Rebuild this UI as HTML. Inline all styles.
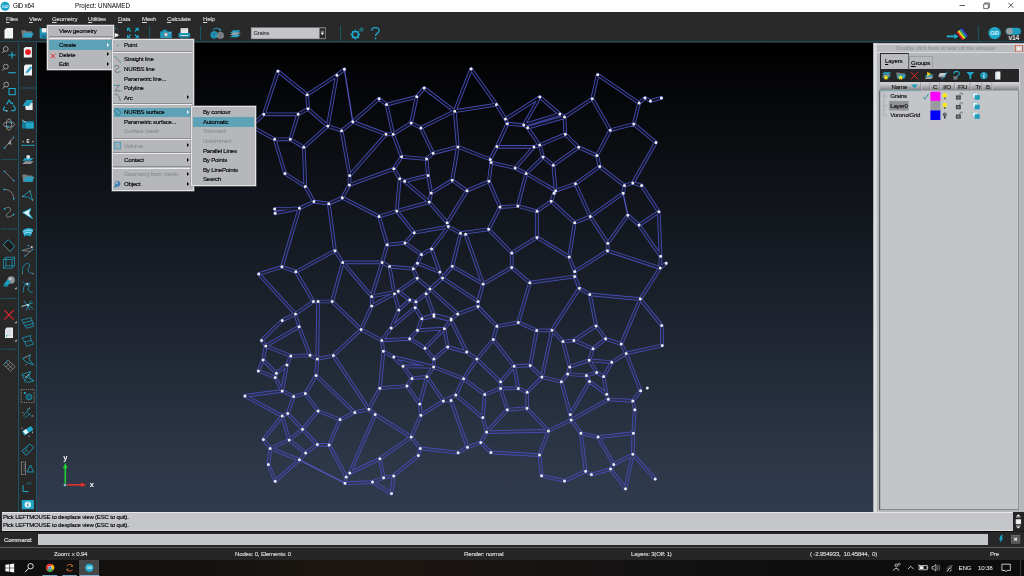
<!DOCTYPE html>
<html><head><meta charset="utf-8"><title>GiD x64</title>
<style>
*{box-sizing:border-box}
html,body{margin:0;padding:0}
body{width:1024px;height:576px;overflow:hidden;position:relative;background:#292929;font-family:"Liberation Sans",sans-serif;font-size:6.1px;letter-spacing:-0.19px;color:#000}
.a{position:absolute}
svg{will-change:transform}
.t{position:absolute;white-space:pre;line-height:8px;height:8px;will-change:transform;-webkit-text-stroke:0.15px}
#title{left:0;top:0;width:1024px;height:12px;background:#fff}
#title .t{font-size:6.3px;letter-spacing:0;color:#000;-webkit-text-stroke:0}
#menubar{left:0;top:12px;width:1024px;height:12px;background:#292929}
#menubar .t{color:#d4d4d4;top:2.9px}
#menubar u{text-decoration-thickness:0.5px;text-underline-offset:0.6px}
#tool{left:0;top:24px;width:1024px;height:18.4px;background:#292929;border-bottom:1px solid #134f5f}
#lt{left:0;top:43px;width:37px;height:469px;background:#282828}
#vp{left:37px;top:43.4px;width:836px;height:468.8px;background:linear-gradient(#000 0%,#0a0c10 20%,#1b212b 55%,#2c3647 88%,#303b4d 100%)}
.menu{position:absolute;background:#b5b7bb;border:1px solid #e4e4e4;box-shadow:0 0 0 0.5px #8a8a8a}
.menu .t{color:#000}
.menu .d{color:#8e9094}
.menu .hl{position:absolute;background:#5da2b6;left:1px;right:1px;height:9.6px}
.menu .sep{position:absolute;left:0.5px;right:0.5px;height:2.200px;background:linear-gradient(#8b8d91 0,#8b8d91 45%,#ececee 55%,#ececee 100%)}
.arr{position:absolute;width:0;height:0;border-left:2.8px solid #000;border-top:2.4px solid transparent;border-bottom:2.4px solid transparent;margin-top:-0.4px}
</style></head><body>
<!--TITLE-->
<div id="title" class="a">
<svg class="a" style="left:0px;top:0.5px" width="11" height="11" viewBox="0 0 11 11"><ellipse cx="5.1" cy="5.3" rx="4.5" ry="4.5" fill="#1aa3c4"/><text x="5.1" y="6.8" font-size="4" font-family="Liberation Sans" fill="#d9f2f8" text-anchor="middle" font-weight="bold">GiD</text></svg>
<div class="t" style="left:12.5px;top:2.4px;letter-spacing:-0.25px">GiD x64</div>
<div class="t" style="left:74.6px;top:2.4px">Project: UNNAMED</div>
<svg class="a" style="left:950px;top:0" width="74" height="12" viewBox="0 0 74 12"><path d="M9.5 5.5h5.5" stroke="#111" stroke-width="0.7" fill="none"/><path d="M33.7 4h4.6v4.6h-4.6zM34.8 4v-1.1h4.6v4.6h-1.1" stroke="#111" stroke-width="0.6" fill="none"/><path d="M58.3 2.8l5 5M63.3 2.8l-5 5" stroke="#111" stroke-width="0.7" fill="none"/></svg>
</div>
<!--MENUBAR-->
<div id="menubar" class="a">
<div class="t" style="left:5.6px"><u>F</u>iles</div>
<div class="t" style="left:28.6px"><u>V</u>iew</div>
<div class="t" style="left:52.4px"><u>G</u>eometry</div>
<div class="t" style="left:88.4px"><u>U</u>tilities</div>
<div class="t" style="left:117.6px"><u>D</u>ata</div>
<div class="t" style="left:141.8px"><u>M</u>esh</div>
<div class="t" style="left:167px"><u>C</u>alculate</div>
<div class="t" style="left:202.6px"><u>H</u>elp</div>
</div>
<!--TOOLBAR-->
<div id="tool" class="a">
<svg class="a" style="left:0;top:0" width="1024" height="18.4" viewBox="0 24 1024 18.4">
<!-- new file -->
<path d="M6.3 28h6.5v10.6H4.2V30z" fill="#f2f4f6"/><path d="M4.2 30h2.1v-2z" fill="#c9d6dc"/><path d="M8.5 32.2v.6M9.3 34.3v.5M7.8 36.5v.5" stroke="#9edcf0" stroke-width="0.7"/>
<!-- folder -->
<path d="M21 30.2h4.2l.8 1h5.6v6.2H22z" fill="#777a7c"/><path d="M24.2 32.8h9.2l-1.9 4.6h-9.3z" fill="#2a9cbe"/><path d="M25.5 34h6.3M25 35.2h6.3" stroke="#45b7d6" stroke-width="0.5"/>
<!-- save -->
<path d="M39.4 28.2h8.2v10.6h-6.8l-1.4-1.4z" fill="#2093b5"/><rect x="41.6" y="28.2" width="6" height="4.2" fill="#f0f2f4"/><rect x="41.6" y="35" width="4.6" height="3.8" fill="#1c6f88"/>
<!-- eye remnants -->
<path d="M114.3 33.2c1.6-.3 3.2.5 4.4 1.9-1.2 1.4-2.8 2.1-4.4 1.9z" fill="#f4f4f4"/><path d="M114.6 28.4h1.2M117 28.8h.8" stroke="#24a6c8" stroke-width="0.8"/>
<!-- fullscreen arrows -->
<g stroke="#1fa6c9" stroke-width="1.1" fill="none"><path d="M127.3 28.2l3.3 3.3M127.3 31v-2.8h2.8"/><path d="M138 28.2l-3.3 3.3M135.2 28.2h2.8V31"/><path d="M127.3 37.8l3.3-3.3M127.3 35v2.8h2.8"/><path d="M138 37.8l-3.3-3.3M135.2 37.8h2.8V35"/></g>
<!-- separators -->
<g stroke="#17657a" stroke-width="0.8"><path d="M149.4 25.8v14.6M200.3 25.8v14.6M340.5 25.8v14.6M978.6 25.8v14.6"/></g>
<!-- camera -->
<path d="M160 31.5h2l1-1.7h3.4l1 1.7h4.2v6.6H160z" fill="#2097b9"/><circle cx="165.8" cy="34.6" r="2.3" fill="#8d9499"/><circle cx="165.8" cy="34.6" r="1.2" fill="#e8eef0"/><rect x="168.8" y="32.4" width="1.8" height="1" fill="#7fd3ea"/>
<!-- printer -->
<rect x="180.4" y="28.2" width="7.6" height="5" fill="#f0f2f4"/><path d="M181.5 29.6h5.4M181.5 31h5.4" stroke="#b5c0c6" stroke-width="0.5"/><path d="M178.4 33h11.6v4.2h-11.6z" fill="#2097b9"/><rect x="180" y="36" width="8.4" height="2.3" fill="#1c6f88"/><rect x="180.4" y="35.2" width="7.6" height="1" fill="#dfe9ec"/>
<!-- cubes -->
<path d="M210.5 32.5l3.6-1.8 3.6 1.8v4.6l-3.6 1.8-3.6-1.800z" fill="#2097b9"/><path d="M210.5 32.5l3.600 1.800 3.6-1.800M214.1 34.300v4.600" stroke="#14586b" stroke-width="0.5" fill="none"/>
<path d="M216.800 33.300l3.400-1.700 3.400 1.700v4.200l-3.400 1.700-3.400-1.700z" fill="#808487"/><path d="M216.800 33.300l3.400 1.700 3.400-1.700M220.200 35v4.200" stroke="#54585a" stroke-width="0.5" fill="none"/>
<path d="M212.500 29.800c2.400-2 5.800-2 8.200.2" stroke="#2aa9cb" stroke-width="0.9" fill="none"/><path d="M219.600 28.600l1.800 1.900-2.500.4z" fill="#2aa9cb"/>
<!-- layers -->
<path d="M233 30.300h7.600l-3.200 2.600h-7.600z" fill="#2aa0c2"/><path d="M233 32.500h7.600l-3.200 2.600h-7.600z" fill="#9aa0a4"/><path d="M233 34.700h7.600l-3.200 2.600h-7.600z" fill="#2aa0c2"/>
<!-- combo -->
<rect x="251" y="27.700" width="74.600" height="11.200" fill="#c3c5c9"/><rect x="251" y="27.700" width="74.600" height="11.200" fill="none" stroke="#8b8d90" stroke-width="0.5"/>
<rect x="319.400" y="28.200" width="5.800" height="10.200" fill="#2a2a2a"/><path d="M320.500 32.600h3.600l-1.800 2.600z" fill="#f4f4f4"/><path d="M320.600 31.200h3.400" stroke="#f4f4f4" stroke-width="0.5"/>
<text x="253.400" y="35.300" font-size="5.700" font-family="Liberation Sans" fill="#111">Grains</text>
<!-- gear -->
<g transform="translate(355.300 34.600)"><circle r="3.100" fill="none" stroke="#1fa6c9" stroke-width="1.700"/><g stroke="#1fa6c9" stroke-width="1.500"><path d="M0 -4.800v1.400M0 4.800v-1.400M-4.800 0h1.400M4.800 0h-1.400M-3.400 -3.400l1 1M3.400 3.400l-1-1M-3.400 3.400l1-1M3.400 -3.400l-1 1"/></g></g>
<circle cx="361.400" cy="29.600" r="1.500" fill="none" stroke="#1fa6c9" stroke-width="0.900"/>
<!-- question -->
<path d="M371.500 30.800c0-4.200 7.600-4.200 7.600 0 0 2.600-3.700 2.600-3.700 5.200" stroke="#1fa6c9" stroke-width="1.300" fill="none"/><rect x="374.700" y="37.600" width="1.500" height="1.700" fill="#1fa6c9"/>
<!-- right: arrow + palette -->
<path d="M947 36.400h8" stroke="#1fb0d4" stroke-width="1.900"/><path d="M954.600 33.600l4 2.800-4 2.800z" fill="#1fb0d4"/>
<g transform="translate(962.600 34) rotate(52)"><rect x="-5.400" y="-4.200" width="10.800" height="8.400" fill="#15131c"/><rect x="-5" y="-3.700" width="10" height="1.400" fill="#4a2c9a"/><rect x="-5" y="-2.400" width="10" height="1.600" fill="#2a6bd8"/><rect x="-5" y="-0.900" width="10" height="1.500" fill="#35c241"/><rect x="-5" y="0.500" width="10" height="1.700" fill="#f6e421"/><rect x="-5" y="2.100" width="10" height="1.600" fill="#e8252b"/></g>
<!-- GiD circle -->
<circle cx="994.800" cy="33.100" r="6.200" fill="#1fa9cc"/><text x="994.800" y="35" font-size="5.200" font-family="Liberation Sans" font-weight="bold" fill="#e2f6fb" text-anchor="middle">GiD</text>
<!-- toggle -->
<rect x="1006" y="27.800" width="15.200" height="7" rx="3.500" fill="#1f9dbd"/><circle cx="1009.700" cy="31.300" r="3.300" fill="#9a9ea1"/>
<text x="1013.900" y="40" font-size="6.600" font-family="Liberation Sans" font-weight="bold" fill="#f2f2f2" text-anchor="middle">v14</text>
</svg>

</div>
<div id="lt" class="a">
<svg class="a" style="left:0;top:0" width="37" height="469" viewBox="0 43 37 469">
<defs><g id="mag"><circle cx="0" cy="0" r="2.400" fill="none" stroke="#a4a8ab" stroke-width="0.900"/><path d="M-1.700 1.900l-1.900 2.100" stroke="#a4a8ab" stroke-width="1"/></g></defs>
<path d="M18.600 43v469M36.500 43v469" stroke="#17657a" stroke-width="0.800"/>
<g stroke="#17657a" stroke-width="0.700"><path d="M1 159.400h16M1 229h16M1 298.400h16M1 349.200h16M20.500 88h15"/></g>
<!-- col1 -->
<use href="#mag" x="5.800" y="49"/><path d="M8.300 55h7.400M12 51.400v7.200" stroke="#1fb0d4" stroke-width="1.100"/>
<use href="#mag" x="5.800" y="66.600"/><path d="M8.300 72.700h7.400" stroke="#1fb0d4" stroke-width="1.100"/>
<use href="#mag" x="6.200" y="84.600"/><rect x="9" y="88.500" width="6.200" height="6.200" fill="none" stroke="#1fb0d4" stroke-width="1"/>
<!-- recycle -->
<g stroke="#1fa6c9" stroke-width="1.200" fill="none"><path d="M6.500 104.500l2.600-4.300 2.300 3.600"/><path d="M13.300 105l1.900 3.400c.5 1.400-.4 2.200-1.600 2.200h-2.400"/><path d="M7.600 110.600h-2.500c-1.400 0-2-1.200-1.300-2.400l1-1.800"/></g><path d="M10.500 103.200l2.300 1.500.3-2.700z" fill="#1fa6c9"/><path d="M6 109.800v2.200l2-1z" fill="#9a9ea1"/>
<!-- rotate -->
<g fill="none" stroke="#9a9ea1" stroke-width="0.800"><ellipse cx="9" cy="124.500" rx="5.600" ry="2.600"/><ellipse cx="9" cy="124.500" rx="2.600" ry="5.600"/></g><circle cx="10.700" cy="122.600" r="0.900" fill="#1fa6c9"/><circle cx="8" cy="126.700" r="1" fill="#1fa6c9"/><circle cx="6.800" cy="128.800" r="0.600" fill="#c9822a"/>
<!-- arrow -->
<path d="M4.500 148l9-10.500" stroke="#9a9ea1" stroke-width="0.800"/><path d="M10.500 139.500l-2.800 5 2.200-.6 1.600 1.400z" fill="#9a9ea1"/><circle cx="4.500" cy="148" r="0.900" fill="#1fa6c9"/><circle cx="13.700" cy="137.300" r="0.800" fill="#1fa6c9"/>
<!-- line -->
<path d="M4.500 171.300l9.200 9.300" stroke="#9a9ea1" stroke-width="0.700"/><circle cx="4.500" cy="171.300" r="0.900" fill="#1fa6c9"/><circle cx="13.700" cy="180.600" r="0.900" fill="#1fa6c9"/>
<!-- arc -->
<path d="M4.200 189.500c5.400-.4 9.200 3.600 9.600 9" stroke="#9a9ea1" stroke-width="0.700" fill="none"/><circle cx="4.200" cy="189.500" r="0.900" fill="#1fa6c9"/><circle cx="13.800" cy="198.800" r="0.900" fill="#1fa6c9"/>
<!-- s-curve -->
<path d="M4.600 209c2.400-2.400 6.200-2 6.200.6 0 2.600-4.600 3.600-4.600 6.200 0 2.400 4.600 1.200 7.200-1.200" stroke="#9a9ea1" stroke-width="0.700" fill="none"/><circle cx="4.600" cy="209" r="0.900" fill="#1fa6c9"/><circle cx="13.600" cy="214.500" r="0.900" fill="#1fa6c9"/>
<!-- surface quad -->
<path d="M3.400 244.500l4.800-4.700 6.400 6.200-4.400 5.600z" fill="#1b1b1b" stroke="#1a8fae" stroke-width="1"/><path d="M3.400 244.500l6.800 7.100" stroke="#b05a3a" stroke-width="0.400"/>
<!-- cube -->
<g stroke="#1a8fae" stroke-width="0.800" fill="none"><rect x="3.400" y="259.500" width="8.600" height="8.600"/><rect x="6" y="257.200" width="8.600" height="8.600"/><path d="M3.400 259.500l2.600-2.300M12 259.500l2.600-2.300M3.400 268.100l2.600-2.300M12 268.100l2.600-2.300"/></g>
<!-- sphere + cyl -->
<circle cx="11.200" cy="280" r="3.700" fill="#8f9498"/><circle cx="10.300" cy="278.800" r="1.600" fill="#b9bec2"/><path d="M3.500 284.500l4.200-5.300 3 2.600-3.600 5z" fill="#1f9dbd"/><ellipse cx="5.300" cy="285.700" rx="2" ry="1.400" fill="#167a94"/><path d="M14.500 289.300h2.200v-2.200z" fill="#d0d0d0"/>
<!-- red X -->
<path d="M4.400 310.200l9.200 9.400M13.600 310.200l-9.200 9.400" stroke="#e8262b" stroke-width="1.100"/><path d="M14.500 323.300h2.200v-2.200z" fill="#d0d0d0"/>
<!-- paper -->
<path d="M6.600 327.600h6.400v10.400h-8v-8.600z" fill="#e8ebee"/><path d="M6.400 330h5M6.400 331.800h5M6.400 333.600h5M6.400 335.400h5" stroke="#b4bfc6" stroke-width="0.500"/><rect x="6" y="335.200" width="1.300" height="1.300" fill="#1fa6c9"/><path d="M14.500 341.500h2.200v-2.200z" fill="#d0d0d0"/>
<!-- grid diamond -->
<g stroke="#8f9498" stroke-width="0.700" fill="none"><path d="M3.600 364.500l4.600-4.400 7 6.400-4.600 5zM5.900 362.300l7 6.700M10.500 362.200l-4.600 4.800M12.800 364.300l-4.500 4.900"/></g><path d="M3.600 364.500l4.600-4.400" stroke="#1a8fae" stroke-width="0.900"/>
<!-- col2 -->
<path d="M25.300 46.900h6.600v10.600h-8.100v-9z" fill="#eef0f2"/><circle cx="28" cy="52.100" r="2.900" fill="#ec1c24"/>
<path d="M25.500 64.400h6.500v11.200h-8v-9.600z" fill="#eef0f2"/><path d="M25.800 73.400l.7-2.500 4.200-4.600 1.500 1.400-4.100 4.700z" fill="#2aa0c2"/>
<path d="M24.600 102.500h8v7.600h-6.800z" fill="#e8ebee"/><path d="M26.400 100h6.800l-4 6h-6.600z" fill="#1f9dbd"/>
<path d="M22 121h11.700v7.500h-11.700z" fill="#167a94"/><path d="M26 122.800h7.700v5.700h-7.700z" fill="#1fa6c9"/><path d="M22 119.800l4 2.600" stroke="#e8ebee" stroke-width="0.700"/>
<text x="28" y="143.300" font-size="4.600" font-family="Liberation Sans" font-weight="bold" fill="#eef0f2" text-anchor="middle">E</text><path d="M22.200 141.600l1.400-.9v1.800zM33.800 141.600l-1.400-.9v1.800z" fill="#d0d0d0"/><path d="M22 145.300h12" stroke="#1fa6c9" stroke-width="0.900"/><circle cx="22.300" cy="145.300" r="0.700" fill="#1fa6c9"/><circle cx="33.700" cy="145.300" r="0.700" fill="#1fa6c9"/>
<path d="M25 158h8.600l-2.800 2.800h-8.600z" fill="#1f9dbd"/><path d="M25 161.200h8.600l-2.800 2.800h-8.600z" fill="#8f9498"/><circle cx="28.200" cy="156.800" r="1.900" fill="#dfe3e6"/>
<path d="M22.200 174.400h4.400l.8 1.100h5.200v6.300h-9.600z" fill="#777a7c"/><path d="M25.400 176.800h8.800l-1.800 5h-9z" fill="#2a9cbe"/>
<path d="M22.500 196.500l7.400-5.500 2.600 9.500-3.800-3.200z" fill="none" stroke="#1a8fae" stroke-width="1"/><circle cx="29.900" cy="191" r="0.700" fill="#9a9ea1"/><circle cx="32.600" cy="200" r="0.700" fill="#9a9ea1"/><circle cx="22.500" cy="196.500" r="0.700" fill="#9a9ea1"/>
<path d="M22.500 212.500l8.400-4 -1.800 5 3.600 5.200-5.200-3z" fill="#dff3f8" stroke="#1fa6c9" stroke-width="0.900"/>
<path d="M22.500 230.500c3-3 7.500-3.500 11-1l-3.200 7c-2-1.500-4.500-1.500-6 0z" fill="#1fa6c9"/><path d="M23.200 232.200c3-2.500 6.500-2.800 9.300-.8M23.900 234c2.700-2.200 5.400-2.400 7.800-.7" stroke="#e8f6fa" stroke-width="0.700" fill="none"/>
<path d="M22 250.500l10.500-3.200M22 250.500l8.500 1M25 256l7.500-6.500" stroke="#9a9ea1" stroke-width="0.700"/><circle cx="22.300" cy="250.500" r="0.800" fill="#1fa6c9"/><circle cx="28.400" cy="245.600" r="0.800" fill="#1fa6c9"/><circle cx="32.500" cy="249.500" r="0.800" fill="#1fa6c9"/><circle cx="25" cy="256" r="0.800" fill="#1fa6c9"/><circle cx="31.800" cy="246.800" r="0.900" fill="#eef0f2"/>
<path d="M22.400 273.500c-.4-6 1.600-10 5.200-10 2.200 0 2.600 2.200 1.200 4-1.600 2-1.200 5.400 4.400 6.200" fill="none" stroke="#1a8fae" stroke-width="0.900"/><circle cx="22.400" cy="273.500" r="0.600" fill="#9a9ea1"/><circle cx="33.200" cy="273.700" r="0.600" fill="#9a9ea1"/>
<path d="M23.300 292.500c-.4-5 1.400-9.500 4.400-9.500 2 0 2.400 2 1 3.600-1.400 2-.8 5 4 6" fill="none" stroke="#1a8fae" stroke-width="0.900"/><path d="M22 281.500l7.500 5M31 282.500l-5.500 3.500" stroke="#1a8fae" stroke-width="0.600"/><circle cx="27.200" cy="284" r="0.900" fill="#eef0f2"/>
<path d="M21.500 306.500l11.500-3.500M24 300.500l6 9.500M26 310.500l5-10M29 305.300l4.500 4" stroke="#1fa6c9" stroke-width="0.700"/><path d="M21.500 306.500l6-1.800" stroke="#d0d0d0" stroke-width="0.800"/><circle cx="28" cy="305" r="0.900" fill="#eef0f2"/>
<g stroke="#1a9cbc" stroke-width="0.800" fill="none"><path d="M21.500 320l9.500-2.500 2.800 8.500-7.300 2.300zM23.200 323l9-2.500M24.800 325.800l8.500-2.300"/></g>
<g stroke="#1a9cbc" stroke-width="0.800" fill="none"><path d="M21.800 338l9-2.500c-1 3 1 6 3 8.500l-7.300 2.300c-1-3-2.500-6-4.700-8.300zM24.500 341.500c2.500.5 5-1 7.500-1"/></g>
<path d="M22.500 358.500l8-4-1.500 5 4.500 5.500-6.500-2.500z" fill="none" stroke="#1a9cbc" stroke-width="0.900"/><path d="M24.500 358l5-2.200" stroke="#c45a4a" stroke-width="0.600"/><circle cx="26" cy="364.800" r="0.600" fill="#9a9ea1"/>
<path d="M22 374.500l8.500-3 -1.500 5.500 5 4-7 1.500-3-3.500z" fill="none" stroke="#1a9cbc" stroke-width="0.800"/><path d="M22 374.500l12 6.500M30.500 371.500l-6.500 11" stroke="#1a9cbc" stroke-width="0.600"/><path d="M25 378l4-4" stroke="#e8ebee" stroke-width="0.600"/>
<rect x="21.200" y="389.500" width="13" height="13" fill="none" stroke="#9a9ea1" stroke-width="0.900" stroke-dasharray="1 1.200"/><circle cx="29" cy="397" r="3" fill="#14566a" stroke="#1a8fae" stroke-width="0.800"/><circle cx="24.800" cy="393" r="1.100" fill="#1fb0d4"/>
<path d="M23 416.500l6.500-8.500M24.500 418l6-4.500M27 411.500l4.500 5" stroke="#1a9cbc" stroke-width="0.700"/><circle cx="29.600" cy="408" r="0.600" fill="#d0d0d0"/><path d="M22.800 412v1.600M32.800 415v1.800M27.600 408.500v1" stroke="#d0d0d0" stroke-width="0.600"/>
<path d="M22 431.500l9-5.500 2.500 3.500-9 6z" fill="#1fa6c9"/><path d="M23 431l3-2 2.500 3.500-3 2z" fill="#e8f6fa"/><path d="M22 427.500v1.500M32.500 431.500v1.800M29 435.500v1.500" stroke="#d0d0d0" stroke-width="0.700"/>
<path d="M21.800 451l8-7 4 3.500-7.500 8z" fill="none" stroke="#1a9cbc" stroke-width="0.900"/><path d="M24.500 448.800l4.500 4M27.800 445.800l-3 7.500" stroke="#1a9cbc" stroke-width="0.500"/>
<rect x="21.500" y="462" width="4" height="12.500" fill="none" stroke="#8f9498" stroke-width="0.700"/><path d="M23.500 464.500h2M23.500 466.500h2M23.500 468.500h2M23.500 470.500h2" stroke="#8f9498" stroke-width="0.500"/><path d="M27 472l3.400-7 3.200 7z" fill="none" stroke="#1a9cbc" stroke-width="0.900"/>
<path d="M23 485v6.500h5.500" stroke="#1fa6c9" stroke-width="1" fill="none"/><text x="26.500" y="485" font-size="4" font-family="Liberation Sans" fill="#1a8fae">XY</text>
<rect x="21.700" y="500" width="12.200" height="9.200" fill="#1fa6c9"/><circle cx="27.800" cy="504.600" r="3.200" fill="#dff3f8"/><path d="M27.800 503.800v2.600M27.800 502.500v.6" stroke="#167a94" stroke-width="1"/>
</svg>

</div>
<div id="vp" class="a">
<svg class="a" style="left:0;top:0" width="836" height="468.800" viewBox="0 0 836 468.800">
<defs><mask id="mk" maskUnits="userSpaceOnUse" x="0" y="0" width="836" height="469"><rect width="836" height="469" fill="#fff"/><path d="M241.0 28.3L270.2 51.8M241.0 28.3L226.8 71.3M502.8 54.1L522.8 71.0M502.8 54.1L468.5 76.0M502.8 54.1L486.8 82.1M270.2 51.8L299.9 32.2M270.2 51.8L271.0 65.8M420.9 103.9L417.7 68.2M420.9 103.9L396.1 110.2M420.9 103.9L415.2 137.2M420.9 103.9L453.2 116.4M299.9 32.2L307.4 26.3M299.9 32.2L290.8 83.0M459.9 103.6L496.9 103.9M459.9 103.6L470.3 80.7M459.9 103.6L453.2 116.4M496.9 103.9L502.7 102.1M496.9 103.9L478.2 125.0M502.7 102.1L528.3 91.3M502.7 102.1L490.7 84.7M502.7 102.1L506.1 114.1M271.0 65.8L261.1 71.3M271.0 65.8L290.8 83.0M522.8 71.0L527.5 74.1M522.8 71.0L486.8 82.1M527.5 74.1L555.2 55.7M527.5 74.1L528.3 91.3M527.5 74.1L490.7 84.7M261.1 71.3L226.8 71.3M261.1 71.3L253.3 96.3M555.2 55.7L560.7 31.8M555.2 55.7L573.3 87.2M226.8 71.3L219.4 78.3M560.7 31.8L602.1 60.0M290.8 83.0L304.6 87.7M290.8 83.0L266.8 104.3M602.1 60.0L608.0 54.9M602.1 60.0L596.8 81.0M608.0 54.9L613.5 58.0M613.5 58.0L624.4 54.9M304.6 87.7L315.8 78.8M304.6 87.7L312.7 132.5M596.8 81.0L573.3 87.2M596.8 81.0L618.9 99.4M315.8 78.8L342.1 55.7M315.8 78.8L349.0 91.3M573.3 87.2L559.9 112.5M253.3 96.3L237.7 96.3M253.3 96.3L266.8 104.3M528.3 91.3L541.6 104.3M237.7 96.3L219.4 86.1M237.7 96.3L248.0 130.5M541.6 104.3L516.3 122.2M541.6 104.3L559.9 112.5M266.8 104.3L268.3 143.5M618.9 99.4L595.8 139.9M342.1 55.7L349.6 61.6M349.6 61.6L356.2 91.3M349.6 61.6L379.7 53.8M349.0 91.3L356.2 91.3M349.0 91.3L312.7 132.5M356.2 91.3L374.2 79.9M356.2 91.3L364.6 113.8M379.7 53.8L387.2 45.0M379.7 53.8L374.2 79.9M387.2 45.0L417.7 68.2M374.2 79.9L383.9 84.9M383.9 84.9L417.7 68.2M383.9 84.9L396.1 110.2M417.7 68.2L434.1 26.0M417.7 68.2L459.4 61.6M434.1 26.0L459.4 61.6M459.4 61.6L468.5 76.0M468.5 76.0L470.3 80.7M470.3 80.7L486.8 82.1M486.8 82.1L490.7 84.7M248.0 130.5L268.3 143.5M221.8 231.1L258.5 270.9M221.8 231.1L244.9 223.8M295.2 258.5L305.7 219.4M295.2 258.5L281.1 258.5M295.2 258.5L324.1 286.4M334.7 253.5L334.7 262.9M334.7 253.5L361.3 248.3M334.7 253.5L305.7 219.4M334.7 253.5L345.1 219.4M334.7 262.9L357.4 250.7M334.7 262.9L324.1 286.4M357.4 250.7L361.3 248.3M357.4 250.7L361.8 267.1M357.4 250.7L352.6 223.6M361.3 248.3L380.2 235.3M361.3 248.3L372.7 256.9M258.5 270.9L276.4 258.5M258.5 270.9L245.2 277.5M258.5 270.9L262.1 283.8M361.8 267.1L372.7 256.9M361.8 267.1L354.2 284.9M244.9 223.8L258.9 228.8M244.9 223.8L262.4 165.3M258.9 228.8L298.0 207.7M258.9 228.8L276.4 258.5M298.0 207.7L305.7 219.4M298.0 207.7L291.8 160.7M305.7 219.4L345.1 219.4M350.2 201.8L345.1 219.4M350.2 201.8L368.0 199.9M350.2 201.8L342.1 173.5M345.1 219.4L352.6 223.6M352.6 223.6L376.3 225.7M276.4 258.5L281.1 258.5M281.1 258.5L280.3 316.1M410.2 179.7L411.3 183.6M410.2 179.7L392.2 159.1M410.2 179.7L430.0 147.7M411.3 183.6L394.6 206.1M411.3 183.6L423.5 190.2M411.3 183.6L377.2 189.8M268.3 143.5L276.9 158.6M368.0 199.9L384.4 211.6M368.0 199.9L377.2 189.8M378.2 264.7L384.9 275.8M378.2 264.7L378.9 258.8M378.2 264.7L354.2 284.9M396.9 271.8L384.9 275.8M396.9 271.8L414.1 276.0M396.9 271.8L389.1 250.7M384.9 275.8L380.5 287.2M384.9 275.8L396.9 273.2M402.8 229.1L405.5 235.0M402.8 229.1L394.6 206.1M402.8 229.1L380.5 220.2M405.5 235.0L415.3 223.3M405.5 235.0L441.0 258.5M405.5 235.0L393.0 246.0M415.3 223.3L446.1 241.0M415.3 223.3L423.5 190.2M446.1 241.0L441.0 258.5M446.1 241.0L474.7 224.4M446.1 241.0L428.6 191.3M441.0 258.5L441.0 263.6M441.0 263.6L420.7 271.0M441.0 263.6L459.9 283.3M420.7 271.0L414.1 276.0M420.7 271.0L393.0 246.0M474.7 210.0L474.7 224.4M474.7 210.0L500.0 194.4M474.7 210.0L451.6 186.3M384.4 211.6L394.6 206.1M384.4 211.6L380.5 220.2M474.7 224.4L492.8 239.7M492.8 239.7L537.7 233.5M492.8 239.7L481.3 279.4M500.0 194.4L532.2 213.9M500.0 194.4L500.0 168.3M380.5 220.2L376.3 225.7M376.3 225.7L380.2 235.3M380.2 235.3L393.0 246.0M393.0 246.0L389.1 250.7M389.1 250.7L378.9 258.8M378.9 258.8L372.7 256.9M451.6 186.3L423.5 190.2M451.6 186.3L463.0 164.1M276.9 158.6L291.8 160.7M276.9 158.6L262.4 165.3M532.2 213.9L537.7 228.5M532.2 213.9L537.7 179.7M537.7 228.5L537.7 233.5M537.7 228.5L570.5 207.7M537.7 233.5L542.4 245.2M570.8 200.3L570.5 207.7M570.8 200.3L590.8 172.2M570.8 200.3L553.3 173.5M570.5 207.7L623.2 224.9M623.2 224.9L623.6 213.2M623.2 224.9L629.1 220.2M623.2 224.9L603.3 256.1M623.6 213.2L621.8 168.8M623.6 213.2L602.1 182.1M542.4 245.2L552.8 251.4M542.4 245.2L515.0 287.2M552.8 251.4L603.3 256.1M552.8 251.4L559.1 282.9M603.3 256.1L584.2 301.0M603.3 256.1L624.7 282.5M423.5 190.2L428.6 191.3M291.8 160.7L305.3 154.7M245.2 277.5L224.6 297.4M354.2 284.9L344.8 297.4M346.4 308.3L356.8 314.1M346.4 308.3L342.9 345.2M346.4 308.3L344.8 297.4M356.8 314.1L366.1 323.2M356.8 314.1L396.6 323.9M226.1 316.9L221.4 327.9M226.1 316.9L239.4 330.2M226.1 316.9L228.8 302.9M221.4 327.9L238.2 334.4M249.9 321.9L239.4 330.2M249.9 321.9L245.2 347.9M249.9 321.9L253.8 313.0M239.4 330.2L238.2 334.4M238.2 334.4L245.2 347.9M245.2 347.9L256.6 353.6M245.2 347.9L208.0 352.9M279.1 332.5L268.3 350.5M279.1 332.5L280.3 316.1M279.1 332.5L317.8 369.4M268.3 350.5L256.6 353.6M268.3 350.5L281.1 367.9M262.1 283.8L228.8 302.9M262.1 283.8L273.0 312.2M256.6 353.6L250.7 370.4M208.0 352.9L245.2 373.0M342.9 345.2L369.9 343.0M342.9 345.2L331.9 366.3M224.6 297.4L228.8 302.9M228.8 302.9L253.8 313.0M253.8 313.0L273.0 312.2M273.0 312.2L280.3 316.1M280.3 316.1L296.4 312.5M296.4 312.5L324.1 286.4M296.4 312.5L331.9 366.3M324.1 286.4L344.8 297.4M344.8 297.4L372.7 295.8M377.2 189.8L359.8 168.0M305.3 154.7L312.4 141.9M305.3 154.7L342.1 173.5M372.7 295.8L380.5 287.2M372.7 295.8L388.0 305.2M366.1 323.2L375.0 335.4M366.1 323.2L396.6 323.9M375.0 335.4L389.9 333.8M375.0 335.4L369.9 343.0M389.9 333.8L406.3 357.9M389.9 333.8L382.8 361.1M389.9 333.8L396.6 323.9M369.9 343.0L382.8 361.1M429.7 309.1L439.9 316.1M429.7 309.1L414.1 277.1M429.7 309.1L410.7 304.1M439.9 316.1L456.3 296.6M439.9 316.1L463.6 338.8M439.9 316.1L426.6 335.7M456.3 296.6L459.9 283.3M456.3 296.6L477.1 323.2M459.9 283.3L481.3 279.4M481.3 279.4L499.7 287.5M499.7 287.5L493.2 322.4M499.7 287.5L515.0 287.2M380.5 287.2L407.4 285.7M477.1 323.2L493.2 322.4M477.1 323.2L463.6 338.8M477.1 323.2L481.3 345.4M493.2 322.4L504.9 334.1M463.6 338.8L463.6 345.4M463.6 345.4L481.3 345.4M463.6 345.4L447.7 351.6M463.6 345.4L470.3 366.8M481.3 345.4L490.2 349.3M490.2 349.3L504.9 334.1M490.2 349.3L490.0 365.2M426.6 335.7L447.7 351.6M426.6 335.7L418.8 352.1M426.6 335.7L396.6 323.9M447.7 351.6L445.8 374.6M418.8 352.1L406.3 357.9M418.8 352.1L445.8 374.6M406.3 357.9L414.1 357.4M406.3 357.9L383.9 372.2M414.1 357.4L430.5 404.3M396.9 273.2L414.1 277.1M382.8 361.1L383.9 372.2M414.1 277.1L407.4 285.7M407.4 285.7L388.0 305.2M407.4 285.7L410.7 304.1M388.0 305.2L396.9 316.1M410.7 304.1L396.9 316.1M396.9 316.1L396.6 323.9M506.1 114.1L516.3 122.2M506.1 114.1L489.2 130.5M312.4 141.9L312.7 132.5M312.4 141.9L356.8 125.8M515.0 287.2L504.9 334.1M515.0 287.2L526.0 298.5M625.2 302.5L589.2 310.4M625.2 302.5L624.7 282.5M552.2 317.2L574.7 319.3M552.2 317.2L532.7 323.9M552.2 317.2L559.6 329.4M552.2 317.2L556.0 305.7M574.7 319.3L566.6 333.6M574.7 319.3L589.2 310.4M532.7 323.9L530.7 331.0M532.7 323.9L526.0 298.5M530.7 331.0L524.4 338.8M530.7 331.0L549.4 332.5M504.9 334.1L524.4 338.8M524.4 338.8L533.3 371.4M549.4 332.5L552.5 338.5M549.4 332.5L559.6 329.4M552.5 338.5L569.7 351.3M552.5 338.5L533.3 371.4M559.6 329.4L566.6 333.6M566.6 333.6L569.7 351.3M526.0 298.5L536.9 297.4M569.7 351.3L571.3 356.3M571.3 356.3L595.8 357.9M571.3 356.3L534.2 376.9M595.8 357.9L603.6 347.7M595.8 357.9L597.8 366.8M603.6 347.7L589.2 310.4M536.9 297.4L559.1 282.9M536.9 297.4L556.0 305.7M559.1 282.9L568.6 295.8M568.6 295.8L556.0 305.7M568.6 295.8L584.2 301.0M584.2 301.0L589.2 310.4M516.3 122.2L518.6 147.7M245.2 373.0L250.7 370.4M245.2 373.0L226.4 396.4M245.2 373.0L252.2 396.9M233.2 405.4L262.4 416.8M233.2 405.4L231.4 421.4M233.2 405.4L226.4 396.4M233.2 405.4L252.2 396.9M268.6 410.0L280.3 401.6M268.6 410.0L262.4 416.8M268.6 410.0L252.2 396.9M280.3 401.6L292.1 401.9M280.3 401.6L265.5 386.3M292.1 401.9L309.2 433.9M292.1 401.9L303.0 376.6M262.4 416.8L238.2 438.2M231.4 421.4L238.2 438.2M309.2 433.9L312.8 430.0M309.2 433.9L308.0 440.2M312.8 430.0L342.9 415.8M312.8 430.0L338.2 371.4M308.0 440.2L335.5 439.1M335.5 439.1L346.6 434.7M335.5 439.1L354.5 450.6M250.7 370.4L265.5 386.3M281.1 367.9L303.0 376.6M281.1 367.9L265.5 386.3M342.9 415.8L346.6 434.7M342.9 415.8L374.2 394.1M346.6 434.7L356.7 432.9M356.7 432.9L354.5 450.6M356.7 432.9L381.3 412.5M303.0 376.6L317.8 369.4M317.8 369.4L331.9 366.3M331.9 366.3L338.2 371.4M338.2 371.4L374.2 394.1M265.5 386.3L252.2 396.9M559.9 112.5L562.7 123.5M356.8 125.8L362.7 135.8M356.8 125.8L364.6 113.8M383.9 372.2L374.2 394.1M470.3 366.8L490.0 365.2M470.3 366.8L449.6 389.1M490.0 365.2L511.4 387.9M502.5 412.1L453.9 409.4M502.5 412.1L511.4 387.9M502.5 412.1L504.6 432.7M374.2 394.1L383.3 405.4M383.3 405.4L381.3 412.5M383.3 405.4L421.1 409.7M421.1 409.7L430.5 404.3M430.5 404.3L443.8 399.6M443.8 399.6L449.6 389.1M443.8 399.6L453.9 409.4M449.6 389.1L445.8 374.6M449.6 389.1L511.4 387.9M562.7 123.5L538.5 140.7M562.7 123.5L587.4 142.5M262.4 165.3L237.7 166.0M262.4 165.3L238.2 170.3M511.4 387.9L534.2 376.9M561.1 394.1L543.9 390.2M561.1 394.1L576.8 421.4M561.1 394.1L596.3 390.2M543.9 390.2L534.2 376.9M543.9 390.2L548.6 428.2M534.2 376.9L533.3 371.4M597.8 366.8L596.3 390.2M504.6 432.7L527.5 437.9M527.5 437.9L548.6 428.2M548.6 428.2L554.4 431.6M554.4 431.6L573.6 426.1M573.6 426.1L576.8 421.4M573.6 426.1L588.5 445.7M576.8 421.4L595.8 411.3M588.5 445.7L595.8 411.3M595.8 411.3L618.2 436.0M595.8 411.3L596.3 390.2M538.5 140.7L518.6 147.7M538.5 140.7L553.3 173.5M518.6 147.7L517.1 150.3M518.6 147.7L489.2 130.5M517.1 150.3L514.2 158.2M342.1 173.5L359.8 168.0M514.2 158.2L537.7 179.7M514.2 158.2L500.0 168.3M359.8 168.0L362.7 135.8M359.8 168.0L392.2 159.1M587.4 142.5L586.1 150.3M587.4 142.5L595.8 139.9M586.1 150.3L553.3 173.5M362.7 135.8L367.7 138.3M367.7 138.3L391.0 132.4M367.7 138.3L392.2 159.1M595.8 139.9L604.6 142.5M364.6 113.8L389.6 116.0M604.6 142.5L621.8 168.8M389.6 116.0L396.1 110.2M389.6 116.0L391.0 132.4M621.8 168.8L602.1 182.1M391.0 132.4L394.2 150.0M590.8 172.2L602.1 182.1M394.2 150.0L392.2 159.1M394.2 150.0L415.2 137.2M553.3 173.5L537.7 179.7M415.2 137.2L430.0 147.7M430.0 147.7L451.9 138.3M451.9 138.3L454.2 119.6M451.9 138.3L463.0 164.1M453.2 116.4L454.2 119.6M454.2 119.6L478.2 125.0M478.2 125.0L489.2 130.5M489.2 130.5L480.8 163.0M463.0 164.1L480.8 163.0M480.8 163.0L500.0 168.3" stroke="#1c1c1c" stroke-width="1.900" stroke-linecap="round" fill="none"/></mask></defs>
<path d="M241.0 28.3L270.2 51.8M241.0 28.3L226.8 71.3M502.8 54.1L522.8 71.0M502.8 54.1L468.5 76.0M502.8 54.1L486.8 82.1M270.2 51.8L299.9 32.2M270.2 51.8L271.0 65.8M420.9 103.9L417.7 68.2M420.9 103.9L396.1 110.2M420.9 103.9L415.2 137.2M420.9 103.9L453.2 116.4M299.9 32.2L307.4 26.3M299.9 32.2L290.8 83.0M459.9 103.6L496.9 103.9M459.9 103.6L470.3 80.7M459.9 103.6L453.2 116.4M496.9 103.9L502.7 102.1M496.9 103.9L478.2 125.0M502.7 102.1L528.3 91.3M502.7 102.1L490.7 84.7M502.7 102.1L506.1 114.1M271.0 65.8L261.1 71.3M271.0 65.8L290.8 83.0M522.8 71.0L527.5 74.1M522.8 71.0L486.8 82.1M527.5 74.1L555.2 55.7M527.5 74.1L528.3 91.3M527.5 74.1L490.7 84.7M261.1 71.3L226.8 71.3M261.1 71.3L253.3 96.3M555.2 55.7L560.7 31.8M555.2 55.7L573.3 87.2M226.8 71.3L219.4 78.3M560.7 31.8L602.1 60.0M290.8 83.0L304.6 87.7M290.8 83.0L266.8 104.3M602.1 60.0L608.0 54.9M602.1 60.0L596.8 81.0M608.0 54.9L613.5 58.0M613.5 58.0L624.4 54.9M304.6 87.7L315.8 78.8M304.6 87.7L312.7 132.5M596.8 81.0L573.3 87.2M596.8 81.0L618.9 99.4M315.8 78.8L342.1 55.7M315.8 78.8L349.0 91.3M573.3 87.2L559.9 112.5M253.3 96.3L237.7 96.3M253.3 96.3L266.8 104.3M528.3 91.3L541.6 104.3M237.7 96.3L219.4 86.1M237.7 96.3L248.0 130.5M541.6 104.3L516.3 122.2M541.6 104.3L559.9 112.5M266.8 104.3L268.3 143.5M618.9 99.4L595.8 139.9M342.1 55.7L349.6 61.6M349.6 61.6L356.2 91.3M349.6 61.6L379.7 53.8M349.0 91.3L356.2 91.3M349.0 91.3L312.7 132.5M356.2 91.3L374.2 79.9M356.2 91.3L364.6 113.8M379.7 53.8L387.2 45.0M379.7 53.8L374.2 79.9M387.2 45.0L417.7 68.2M374.2 79.9L383.9 84.9M383.9 84.9L417.7 68.2M383.9 84.9L396.1 110.2M417.7 68.2L434.1 26.0M417.7 68.2L459.4 61.6M434.1 26.0L459.4 61.6M459.4 61.6L468.5 76.0M468.5 76.0L470.3 80.7M470.3 80.7L486.8 82.1M486.8 82.1L490.7 84.7M248.0 130.5L268.3 143.5M221.8 231.1L258.5 270.9M221.8 231.1L244.9 223.8M295.2 258.5L305.7 219.4M295.2 258.5L281.1 258.5M295.2 258.5L324.1 286.4M334.7 253.5L334.7 262.9M334.7 253.5L361.3 248.3M334.7 253.5L305.7 219.4M334.7 253.5L345.1 219.4M334.7 262.9L357.4 250.7M334.7 262.9L324.1 286.4M357.4 250.7L361.3 248.3M357.4 250.7L361.8 267.1M357.4 250.7L352.6 223.6M361.3 248.3L380.2 235.3M361.3 248.3L372.7 256.9M258.5 270.9L276.4 258.5M258.5 270.9L245.2 277.5M258.5 270.9L262.1 283.8M361.8 267.1L372.7 256.9M361.8 267.1L354.2 284.9M244.9 223.8L258.9 228.8M244.9 223.8L262.4 165.3M258.9 228.8L298.0 207.7M258.9 228.8L276.4 258.5M298.0 207.7L305.7 219.4M298.0 207.7L291.8 160.7M305.7 219.4L345.1 219.4M350.2 201.8L345.1 219.4M350.2 201.8L368.0 199.9M350.2 201.8L342.1 173.5M345.1 219.4L352.6 223.6M352.6 223.6L376.3 225.7M276.4 258.5L281.1 258.5M281.1 258.5L280.3 316.1M410.2 179.7L411.3 183.6M410.2 179.7L392.2 159.1M410.2 179.7L430.0 147.7M411.3 183.6L394.6 206.1M411.3 183.6L423.5 190.2M411.3 183.6L377.2 189.8M268.3 143.5L276.9 158.6M368.0 199.9L384.4 211.6M368.0 199.9L377.2 189.8M378.2 264.7L384.9 275.8M378.2 264.7L378.9 258.8M378.2 264.7L354.2 284.9M396.9 271.8L384.9 275.8M396.9 271.8L414.1 276.0M396.9 271.8L389.1 250.7M384.9 275.8L380.5 287.2M384.9 275.8L396.9 273.2M402.8 229.1L405.5 235.0M402.8 229.1L394.6 206.1M402.8 229.1L380.5 220.2M405.5 235.0L415.3 223.3M405.5 235.0L441.0 258.5M405.5 235.0L393.0 246.0M415.3 223.3L446.1 241.0M415.3 223.3L423.5 190.2M446.1 241.0L441.0 258.5M446.1 241.0L474.7 224.4M446.1 241.0L428.6 191.3M441.0 258.5L441.0 263.6M441.0 263.6L420.7 271.0M441.0 263.6L459.9 283.3M420.7 271.0L414.1 276.0M420.7 271.0L393.0 246.0M474.7 210.0L474.7 224.4M474.7 210.0L500.0 194.4M474.7 210.0L451.6 186.3M384.4 211.6L394.6 206.1M384.4 211.6L380.5 220.2M474.7 224.4L492.8 239.7M492.8 239.7L537.7 233.5M492.8 239.7L481.3 279.4M500.0 194.4L532.2 213.9M500.0 194.4L500.0 168.3M380.5 220.2L376.3 225.7M376.3 225.7L380.2 235.3M380.2 235.3L393.0 246.0M393.0 246.0L389.1 250.7M389.1 250.7L378.9 258.8M378.9 258.8L372.7 256.9M451.6 186.3L423.5 190.2M451.6 186.3L463.0 164.1M276.9 158.6L291.8 160.7M276.9 158.6L262.4 165.3M532.2 213.9L537.7 228.5M532.2 213.9L537.7 179.7M537.7 228.5L537.7 233.5M537.7 228.5L570.5 207.7M537.7 233.5L542.4 245.2M570.8 200.3L570.5 207.7M570.8 200.3L590.8 172.2M570.8 200.3L553.3 173.5M570.5 207.7L623.2 224.9M623.2 224.9L623.6 213.2M623.2 224.9L629.1 220.2M623.2 224.9L603.3 256.1M623.6 213.2L621.8 168.8M623.6 213.2L602.1 182.1M542.4 245.2L552.8 251.4M542.4 245.2L515.0 287.2M552.8 251.4L603.3 256.1M552.8 251.4L559.1 282.9M603.3 256.1L584.2 301.0M603.3 256.1L624.7 282.5M423.5 190.2L428.6 191.3M291.8 160.7L305.3 154.7M245.2 277.5L224.6 297.4M354.2 284.9L344.8 297.4M346.4 308.3L356.8 314.1M346.4 308.3L342.9 345.2M346.4 308.3L344.8 297.4M356.8 314.1L366.1 323.2M356.8 314.1L396.6 323.9M226.1 316.9L221.4 327.9M226.1 316.9L239.4 330.2M226.1 316.9L228.8 302.9M221.4 327.9L238.2 334.4M249.9 321.9L239.4 330.2M249.9 321.9L245.2 347.9M249.9 321.9L253.8 313.0M239.4 330.2L238.2 334.4M238.2 334.4L245.2 347.9M245.2 347.9L256.6 353.6M245.2 347.9L208.0 352.9M279.1 332.5L268.3 350.5M279.1 332.5L280.3 316.1M279.1 332.5L317.8 369.4M268.3 350.5L256.6 353.6M268.3 350.5L281.1 367.9M262.1 283.8L228.8 302.9M262.1 283.8L273.0 312.2M256.6 353.6L250.7 370.4M208.0 352.9L245.2 373.0M342.9 345.2L369.9 343.0M342.9 345.2L331.9 366.3M224.6 297.4L228.8 302.9M228.8 302.9L253.8 313.0M253.8 313.0L273.0 312.2M273.0 312.2L280.3 316.1M280.3 316.1L296.4 312.5M296.4 312.5L324.1 286.4M296.4 312.5L331.9 366.3M324.1 286.4L344.8 297.4M344.8 297.4L372.7 295.8M377.2 189.8L359.8 168.0M305.3 154.7L312.4 141.9M305.3 154.7L342.1 173.5M372.7 295.8L380.5 287.2M372.7 295.8L388.0 305.2M366.1 323.2L375.0 335.4M366.1 323.2L396.6 323.9M375.0 335.4L389.9 333.8M375.0 335.4L369.9 343.0M389.9 333.8L406.3 357.9M389.9 333.8L382.8 361.1M389.9 333.8L396.6 323.9M369.9 343.0L382.8 361.1M429.7 309.1L439.9 316.1M429.7 309.1L414.1 277.1M429.7 309.1L410.7 304.1M439.9 316.1L456.3 296.6M439.9 316.1L463.6 338.8M439.9 316.1L426.6 335.7M456.3 296.6L459.9 283.3M456.3 296.6L477.1 323.2M459.9 283.3L481.3 279.4M481.3 279.4L499.7 287.5M499.7 287.5L493.2 322.4M499.7 287.5L515.0 287.2M380.5 287.2L407.4 285.7M477.1 323.2L493.2 322.4M477.1 323.2L463.6 338.8M477.1 323.2L481.3 345.4M493.2 322.4L504.9 334.1M463.6 338.8L463.6 345.4M463.6 345.4L481.3 345.4M463.6 345.4L447.7 351.6M463.6 345.4L470.3 366.8M481.3 345.4L490.2 349.3M490.2 349.3L504.9 334.1M490.2 349.3L490.0 365.2M426.6 335.7L447.7 351.6M426.6 335.7L418.8 352.1M426.6 335.7L396.6 323.9M447.7 351.6L445.8 374.6M418.8 352.1L406.3 357.9M418.8 352.1L445.8 374.6M406.3 357.9L414.1 357.4M406.3 357.9L383.9 372.2M414.1 357.4L430.5 404.3M396.9 273.2L414.1 277.1M382.8 361.1L383.9 372.2M414.1 277.1L407.4 285.7M407.4 285.7L388.0 305.2M407.4 285.7L410.7 304.1M388.0 305.2L396.9 316.1M410.7 304.1L396.9 316.1M396.9 316.1L396.6 323.9M506.1 114.1L516.3 122.2M506.1 114.1L489.2 130.5M312.4 141.9L312.7 132.5M312.4 141.9L356.8 125.8M515.0 287.2L504.9 334.1M515.0 287.2L526.0 298.5M625.2 302.5L589.2 310.4M625.2 302.5L624.7 282.5M552.2 317.2L574.7 319.3M552.2 317.2L532.7 323.9M552.2 317.2L559.6 329.4M552.2 317.2L556.0 305.7M574.7 319.3L566.6 333.6M574.7 319.3L589.2 310.4M532.7 323.9L530.7 331.0M532.7 323.9L526.0 298.5M530.7 331.0L524.4 338.8M530.7 331.0L549.4 332.5M504.9 334.1L524.4 338.8M524.4 338.8L533.3 371.4M549.4 332.5L552.5 338.5M549.4 332.5L559.6 329.4M552.5 338.5L569.7 351.3M552.5 338.5L533.3 371.4M559.6 329.4L566.6 333.6M566.6 333.6L569.7 351.3M526.0 298.5L536.9 297.4M569.7 351.3L571.3 356.3M571.3 356.3L595.8 357.9M571.3 356.3L534.2 376.9M595.8 357.9L603.6 347.7M595.8 357.9L597.8 366.8M603.6 347.7L589.2 310.4M536.9 297.4L559.1 282.9M536.9 297.4L556.0 305.7M559.1 282.9L568.6 295.8M568.6 295.8L556.0 305.7M568.6 295.8L584.2 301.0M584.2 301.0L589.2 310.4M516.3 122.2L518.6 147.7M245.2 373.0L250.7 370.4M245.2 373.0L226.4 396.4M245.2 373.0L252.2 396.9M233.2 405.4L262.4 416.8M233.2 405.4L231.4 421.4M233.2 405.4L226.4 396.4M233.2 405.4L252.2 396.9M268.6 410.0L280.3 401.6M268.6 410.0L262.4 416.8M268.6 410.0L252.2 396.9M280.3 401.6L292.1 401.9M280.3 401.6L265.5 386.3M292.1 401.9L309.2 433.9M292.1 401.9L303.0 376.6M262.4 416.8L238.2 438.2M231.4 421.4L238.2 438.2M309.2 433.9L312.8 430.0M309.2 433.9L308.0 440.2M312.8 430.0L342.9 415.8M312.8 430.0L338.2 371.4M308.0 440.2L335.5 439.1M335.5 439.1L346.6 434.7M335.5 439.1L354.5 450.6M250.7 370.4L265.5 386.3M281.1 367.9L303.0 376.6M281.1 367.9L265.5 386.3M342.9 415.8L346.6 434.7M342.9 415.8L374.2 394.1M346.6 434.7L356.7 432.9M356.7 432.9L354.5 450.6M356.7 432.9L381.3 412.5M303.0 376.6L317.8 369.4M317.8 369.4L331.9 366.3M331.9 366.3L338.2 371.4M338.2 371.4L374.2 394.1M265.5 386.3L252.2 396.9M559.9 112.5L562.7 123.5M356.8 125.8L362.7 135.8M356.8 125.8L364.6 113.8M383.9 372.2L374.2 394.1M470.3 366.8L490.0 365.2M470.3 366.8L449.6 389.1M490.0 365.2L511.4 387.9M502.5 412.1L453.9 409.4M502.5 412.1L511.4 387.9M502.5 412.1L504.6 432.7M374.2 394.1L383.3 405.4M383.3 405.4L381.3 412.5M383.3 405.4L421.1 409.7M421.1 409.7L430.5 404.3M430.5 404.3L443.8 399.6M443.8 399.6L449.6 389.1M443.8 399.6L453.9 409.4M449.6 389.1L445.8 374.6M449.6 389.1L511.4 387.9M562.7 123.5L538.5 140.7M562.7 123.5L587.4 142.5M262.4 165.3L237.7 166.0M262.4 165.3L238.2 170.3M511.4 387.9L534.2 376.9M561.1 394.1L543.9 390.2M561.1 394.1L576.8 421.4M561.1 394.1L596.3 390.2M543.9 390.2L534.2 376.9M543.9 390.2L548.6 428.2M534.2 376.9L533.3 371.4M597.8 366.8L596.3 390.2M504.6 432.7L527.5 437.9M527.5 437.9L548.6 428.2M548.6 428.2L554.4 431.6M554.4 431.6L573.6 426.1M573.6 426.1L576.8 421.4M573.6 426.1L588.5 445.7M576.8 421.4L595.8 411.3M588.5 445.7L595.8 411.3M595.8 411.3L618.2 436.0M595.8 411.3L596.3 390.2M538.5 140.7L518.6 147.7M538.5 140.7L553.3 173.5M518.6 147.7L517.1 150.3M518.6 147.7L489.2 130.5M517.1 150.3L514.2 158.2M342.1 173.5L359.8 168.0M514.2 158.2L537.7 179.7M514.2 158.2L500.0 168.3M359.8 168.0L362.7 135.8M359.8 168.0L392.2 159.1M587.4 142.5L586.1 150.3M587.4 142.5L595.8 139.9M586.1 150.3L553.3 173.5M362.7 135.8L367.7 138.3M367.7 138.3L391.0 132.4M367.7 138.3L392.2 159.1M595.8 139.9L604.6 142.5M364.6 113.8L389.6 116.0M604.6 142.5L621.8 168.8M389.6 116.0L396.1 110.2M389.6 116.0L391.0 132.4M621.8 168.8L602.1 182.1M391.0 132.4L394.2 150.0M590.8 172.2L602.1 182.1M394.2 150.0L392.2 159.1M394.2 150.0L415.2 137.2M553.3 173.5L537.7 179.7M415.2 137.2L430.0 147.7M430.0 147.7L451.9 138.3M451.9 138.3L454.2 119.6M451.9 138.3L463.0 164.1M453.2 116.4L454.2 119.6M454.2 119.6L478.2 125.0M478.2 125.0L489.2 130.5M489.2 130.5L480.8 163.0M463.0 164.1L480.8 163.0M480.8 163.0L500.0 168.3" stroke="#454bb3" stroke-width="3.700" stroke-linecap="round" fill="none" mask="url(#mk)"/>
<path d="M307.4 26.3L315.8 78.8M262.4 416.8L308.0 440.2M586.1 150.3L590.8 172.2" stroke="#5258c4" stroke-width="1.300" stroke-linecap="round" fill="none"/>
<path d="M241.0 28.3h0M270.2 51.8h0M299.9 32.2h0M307.4 26.3h0M271.0 65.8h0M261.1 71.3h0M226.8 71.3h0M290.8 83.0h0M304.6 87.7h0M315.8 78.8h0M253.3 96.3h0M237.7 96.3h0M266.8 104.3h0M342.1 55.7h0M349.6 61.6h0M349.0 91.3h0M356.2 91.3h0M379.7 53.8h0M387.2 45.0h0M374.2 79.9h0M383.9 84.9h0M417.7 68.2h0M434.1 26.0h0M459.4 61.6h0M468.5 76.0h0M470.3 80.7h0M486.8 82.1h0M490.7 84.7h0M502.8 54.1h0M420.9 103.9h0M459.9 103.6h0M496.9 103.9h0M502.7 102.1h0M522.8 71.0h0M527.5 74.1h0M555.2 55.7h0M560.7 31.8h0M602.1 60.0h0M608.0 54.9h0M613.5 58.0h0M624.4 54.9h0M596.8 81.0h0M573.3 87.2h0M528.3 91.3h0M541.6 104.3h0M618.9 99.4h0M248.0 130.5h0M268.3 143.5h0M276.9 158.6h0M291.8 160.7h0M305.3 154.7h0M312.4 141.9h0M312.7 132.5h0M356.8 125.8h0M262.4 165.3h0M237.7 166.0h0M238.2 170.3h0M342.1 173.5h0M359.8 168.0h0M362.7 135.8h0M364.6 113.8h0M367.7 138.3h0M389.6 116.0h0M396.1 110.2h0M391.0 132.4h0M394.2 150.0h0M392.2 159.1h0M415.2 137.2h0M430.0 147.7h0M451.9 138.3h0M453.2 116.4h0M454.2 119.6h0M478.2 125.0h0M489.2 130.5h0M463.0 164.1h0M480.8 163.0h0M500.0 168.3h0M410.2 179.7h0M411.3 183.6h0M451.6 186.3h0M423.5 190.2h0M377.2 189.8h0M506.1 114.1h0M516.3 122.2h0M559.9 112.5h0M562.7 123.5h0M538.5 140.7h0M518.6 147.7h0M517.1 150.3h0M514.2 158.2h0M587.4 142.5h0M586.1 150.3h0M595.8 139.9h0M604.6 142.5h0M621.8 168.8h0M590.8 172.2h0M602.1 182.1h0M553.3 173.5h0M537.7 179.7h0M221.8 231.1h0M244.9 223.8h0M258.9 228.8h0M298.0 207.7h0M305.7 219.4h0M350.2 201.8h0M345.1 219.4h0M352.6 223.6h0M276.4 258.5h0M281.1 258.5h0M295.2 258.5h0M334.7 253.5h0M334.7 262.9h0M357.4 250.7h0M361.3 248.3h0M258.5 270.9h0M361.8 267.1h0M368.0 199.9h0M384.4 211.6h0M394.6 206.1h0M380.5 220.2h0M376.3 225.7h0M380.2 235.3h0M393.0 246.0h0M389.1 250.7h0M378.9 258.8h0M372.7 256.9h0M378.2 264.7h0M396.9 271.8h0M384.9 275.8h0M402.8 229.1h0M405.5 235.0h0M415.3 223.3h0M428.6 191.3h0M446.1 241.0h0M441.0 258.5h0M441.0 263.6h0M420.7 271.0h0M414.1 276.0h0M474.7 210.0h0M474.7 224.4h0M492.8 239.7h0M500.0 194.4h0M532.2 213.9h0M537.7 228.5h0M537.7 233.5h0M570.8 200.3h0M570.5 207.7h0M623.2 224.9h0M623.6 213.2h0M629.1 220.2h0M542.4 245.2h0M552.8 251.4h0M603.3 256.1h0M245.2 277.5h0M262.1 283.8h0M224.6 297.4h0M228.8 302.9h0M253.8 313.0h0M273.0 312.2h0M280.3 316.1h0M296.4 312.5h0M324.1 286.4h0M344.8 297.4h0M354.2 284.9h0M346.4 308.3h0M356.8 314.1h0M226.1 316.9h0M221.4 327.9h0M249.9 321.9h0M239.4 330.2h0M238.2 334.4h0M245.2 347.9h0M279.1 332.5h0M268.3 350.5h0M256.6 353.6h0M208.0 352.9h0M342.9 345.2h0M372.7 295.8h0M380.5 287.2h0M396.9 273.2h0M414.1 277.1h0M407.4 285.7h0M388.0 305.2h0M410.7 304.1h0M396.9 316.1h0M396.6 323.9h0M366.1 323.2h0M375.0 335.4h0M389.9 333.8h0M369.9 343.0h0M429.7 309.1h0M439.9 316.1h0M456.3 296.6h0M459.9 283.3h0M481.3 279.4h0M499.7 287.5h0M477.1 323.2h0M493.2 322.4h0M463.6 338.8h0M463.6 345.4h0M481.3 345.4h0M490.2 349.3h0M426.6 335.7h0M447.7 351.6h0M418.8 352.1h0M406.3 357.9h0M382.8 361.1h0M515.0 287.2h0M526.0 298.5h0M536.9 297.4h0M559.1 282.9h0M568.6 295.8h0M556.0 305.7h0M584.2 301.0h0M589.2 310.4h0M624.7 282.5h0M625.2 302.5h0M552.2 317.2h0M574.7 319.3h0M532.7 323.9h0M530.7 331.0h0M504.9 334.1h0M524.4 338.8h0M549.4 332.5h0M552.5 338.5h0M559.6 329.4h0M566.6 333.6h0M569.7 351.3h0M571.3 356.3h0M595.8 357.9h0M603.6 347.7h0M610.3 345.0h0M245.2 373.0h0M250.7 370.4h0M281.1 367.9h0M303.0 376.6h0M317.8 369.4h0M331.9 366.3h0M338.2 371.4h0M265.5 386.3h0M226.4 396.4h0M252.2 396.9h0M233.2 405.4h0M268.6 410.0h0M280.3 401.6h0M292.1 401.9h0M262.4 416.8h0M231.4 421.4h0M238.2 438.2h0M309.2 433.9h0M312.8 430.0h0M308.0 440.2h0M335.5 439.1h0M342.9 415.8h0M346.6 434.7h0M356.7 432.9h0M383.9 372.2h0M414.1 357.4h0M374.2 394.1h0M383.3 405.4h0M381.3 412.5h0M421.1 409.7h0M430.5 404.3h0M443.8 399.6h0M449.6 389.1h0M445.8 374.6h0M453.9 409.4h0M470.3 366.8h0M490.0 365.2h0M502.5 412.1h0M511.4 387.9h0M504.6 432.7h0M527.5 437.9h0M548.6 428.2h0M554.4 431.6h0M573.6 426.1h0M576.8 421.4h0M588.5 445.7h0M595.8 411.3h0M618.2 436.0h0M596.3 390.2h0M561.1 394.1h0M543.9 390.2h0M534.2 376.9h0M533.3 371.4h0M597.8 366.8h0M354.5 450.6h0" stroke="#ececf4" stroke-width="3.000" stroke-linecap="round" fill="none"/>
<g><path d="M28.300 441.800v-18" stroke="#22d130" stroke-width="1.600"/><path d="M28.300 419.800l-2.400 5.400h4.800z" fill="#22d130"/><path d="M28.300 441.800h17" stroke="#e0302a" stroke-width="1.600"/><path d="M49.300 441.800l-5.400-2.400v4.800z" fill="#e0302a"/><circle cx="28" cy="442" r="1.900" fill="#2a6a7a"/><path d="M27.200 441.200l1.600 1.600M28.800 441.200l-1.600 1.600" stroke="#e8f4f8" stroke-width="0.700"/><text x="26.300" y="416.800" font-size="7.500" font-family="Liberation Sans" font-weight="bold" fill="#f4f4f4">y</text><text x="52.800" y="443.600" font-size="7.500" font-family="Liberation Sans" font-weight="bold" fill="#f4f4f4">x</text></g>
</svg>
</div>
<div class="menu" style="left:47px;top:24.6px;width:67.0px;height:45.7px">
<div class="t" style="left:11.0px;top:1.2px">View geometry</div>
<div class="sep" style="top:10.9px"></div>
<div class="hl" style="top:14.9px"></div>
<div class="t" style="left:11.0px;top:15.4px">Create</div>
<div class="arr" style="left:58.8px;top:17.6px;border-left-color:#fff"></div>
<div class="t" style="left:11.0px;top:25.0px">Delete</div>
<div class="arr" style="left:58.8px;top:27.2px;border-left-color:#000"></div>
<div class="t" style="left:11.0px;top:34.6px">Edit</div>
<div class="arr" style="left:58.8px;top:36.8px;border-left-color:#000"></div>
<svg class="a" style="left:0;top:0" width="66" height="45" viewBox="47 24.600 66 45"><path d="M49.800 52.300l4.400 4.600M54.200 52.300l-4.400 4.600" stroke="#e8262b" stroke-width="0.9"/></svg>
</div>
<div class="menu" style="left:111.7px;top:39.2px;width:82.0px;height:151.6px">
<div class="t" style="left:11.1px;top:0.9px">Point</div>
<div class="sep" style="top:10.5px"></div>
<div class="t" style="left:11.1px;top:15.3px">Straight line</div>
<div class="t" style="left:11.1px;top:24.9px">NURBS line</div>
<div class="t" style="left:11.1px;top:34.4px">Parametric line...</div>
<div class="t" style="left:11.1px;top:43.9px">Polyline</div>
<div class="t" style="left:11.1px;top:53.4px">Arc</div>
<div class="arr" style="left:73.9px;top:55.6px;border-left-color:#000"></div>
<div class="sep" style="top:63.0px"></div>
<div class="hl" style="top:67.6px"></div>
<div class="t" style="left:11.1px;top:68.1px">NURBS surface</div>
<div class="arr" style="left:73.9px;top:70.3px;border-left-color:#fff"></div>
<div class="t" style="left:11.1px;top:77.6px">Parametric surface...</div>
<div class="t d" style="left:11.1px;top:87.3px">Surface mesh</div>
<div class="sep" style="top:97.5px"></div>
<div class="t d" style="left:11.1px;top:101.4px">Volume</div>
<div class="arr" style="left:73.9px;top:103.6px;border-left-color:#000"></div>
<div class="sep" style="top:111.8px"></div>
<div class="t" style="left:11.1px;top:115.9px">Contact</div>
<div class="arr" style="left:73.9px;top:118.1px;border-left-color:#000"></div>
<div class="sep" style="top:126.3px"></div>
<div class="t d" style="left:11.1px;top:130.3px">Geometry from mesh</div>
<div class="arr" style="left:73.9px;top:132.5px;border-left-color:#000"></div>
<div class="t" style="left:11.1px;top:139.8px">Object</div>
<div class="arr" style="left:73.9px;top:142.0px;border-left-color:#000"></div>
<svg class="a" style="left:0;top:0" width="82" height="151" viewBox="112.700 40.200 82 151">
<circle cx="117.200" cy="45.600" r="0.700" fill="#1d87a5"/>
<path d="M114.700 56.700l5.300 5.800" stroke="#5a5d60" stroke-width="0.600"/><circle cx="114.700" cy="56.700" r="0.600" fill="#1fa0c2"/><circle cx="120" cy="62.500" r="0.600" fill="#1fa0c2"/>
<path d="M114.500 66.500c1.500-1.200 4-1.200 4 .6s-3.600 2.400-3.600 4.200 2.800 1.400 4.600 .6" stroke="#5a5d60" stroke-width="0.700" fill="none"/><circle cx="114.500" cy="66.500" r="0.600" fill="#1fa0c2"/><circle cx="119.700" cy="71.800" r="0.600" fill="#1fa0c2"/>
<path d="M114.300 85.600h4.600l-4.200 5.400h5.200" stroke="#5a5d60" stroke-width="0.700" fill="none"/><circle cx="114.300" cy="85.600" r="0.600" fill="#1fa0c2"/><circle cx="119.900" cy="91" r="0.600" fill="#1fa0c2"/><circle cx="118.900" cy="85.600" r="0.600" fill="#1fa0c2"/>
<path d="M114 94.400c3.300 0 5.800 2.600 5.800 6.400" stroke="#5a5d60" stroke-width="0.700" fill="none"/><circle cx="119.800" cy="100.800" r="0.600" fill="#1fa0c2"/>
<path d="M113.700 111.200l3.200-2.800 4 4.400-3 3.200z" stroke="#176d86" stroke-width="0.800" fill="none"/>
<rect x="114" y="142.800" width="6.400" height="6.400" fill="#8fb6c4" stroke="#3e93ad" stroke-width="0.700"/><rect x="115.800" y="144.600" width="2.800" height="2.800" fill="#b5b7bb" stroke="#7a9aa6" stroke-width="0.400"/>
<circle cx="117.400" cy="184" r="2.700" fill="#4a7fb0"/><circle cx="116.600" cy="183.100" r="1" fill="#a8cbe6"/><path d="M113.200 187.800l2.200-3 1.600 2.600z" fill="#2a8fb0"/>
</svg>
</div>
<div class="menu" style="left:191.3px;top:106.3px;width:64.9px;height:79.9px">
<div class="t" style="left:10.7px;top:1.0px">By contour</div>
<div class="hl" style="top:10.0px"></div>
<div class="t" style="left:10.7px;top:10.5px">Automatic</div>
<div class="t d" style="left:10.7px;top:20.0px">Trimmed</div>
<div class="t d" style="left:10.7px;top:29.7px">Untrimmed</div>
<div class="t" style="left:10.7px;top:39.3px">Parallel Lines</div>
<div class="t" style="left:10.7px;top:48.8px">By Points</div>
<div class="t" style="left:10.7px;top:58.5px">By LinePoints</div>
<div class="t" style="left:10.7px;top:68.0px">Search</div>

</div>

<div class="a" style="left:873.4px;top:43.2px;width:150.6px;height:468.8px;background:#b5b7bb">
<div class="a" style="left:0;top:0;width:3.2px;height:468.8px;background:linear-gradient(90deg,#8f9194,#e2e3e5 40%,#d0d1d4)"></div>
<div class="a" style="left:3.2px;top:0.6px;width:147.400px;height:8.800px;background:#babcc0;border-top:0.6px solid #dcdde0;border-bottom:0.7px solid #d8d9dc"></div>
<div class="t" style="left:22.600px;top:1px;color:#97999d;font-size:6.100px">Double click here to tear off the window</div>
<svg class="a" style="left:141.500px;top:1.600px" width="7.600" height="7.200" viewBox="0 0 7.600 7.200"><rect x="0.300" y="0.300" width="7" height="6.600" fill="#e8d8d4" stroke="#c2452f" stroke-width="0.700"/><circle cx="3.800" cy="3.600" r="1.900" fill="#f6f6f6" stroke="#b0b0b0" stroke-width="0.500"/></svg>
<!-- tabs -->
<div class="a" style="left:35.600px;top:12.400px;width:23.600px;height:12.200px;background:#b7b9bd;border:0.800px solid #9c9ea2;border-bottom:none"></div>
<div class="a" style="left:6.200px;top:10.100px;width:29.600px;height:15.800px;background:#babcc0;border:0.900px solid #2a2a2a;border-bottom:none;border-right-color:#6a6c6f"></div>
<div class="t" style="left:11.700px;top:14.300px;font-size:6.200px"><u>L</u>ayers</div>
<div class="t" style="left:37.400px;top:15.400px;font-size:6.200px"><u>G</u>roups</div>
<!-- dark toolbar -->
<div class="a" style="left:6.700px;top:25.400px;width:139.300px;height:13.500px;background:#262626"></div>
<svg class="a" style="left:0;top:0" width="150.600" height="468.800" viewBox="873.400 43.200 150.600 468.800">
<!-- tb icons -->
<g><path d="M884.500 72.500h7l-2.400 2h-7z" fill="#2aa5c7"/><path d="M884.500 74.600h7l-2.400 2h-7z" fill="#8a9ba3"/><path d="M884.500 76.400h7l-2.400 2h-7z" fill="#1d7e98"/><path d="M886.300 75.200l.9 1.500 1.700.3-1.200 1.200.3 1.700-1.700-.8-1.600.8.300-1.700-1.200-1.200 1.700-.3z" fill="#f7e71c"/></g>
<g><path d="M896.500 72.600h3.400l.7.900h4.600v5h-7.700z" fill="#777a7c"/><path d="M898.700 74.700h7.700l-1.600 4h-7.600z" fill="#2a9cbe"/><path d="M901 75.200l.9 1.500 1.700.3-1.200 1.200.3 1.700-1.700-.8-1.600.8.300-1.700-1.200-1.200 1.700-.3z" fill="#f7e71c"/></g>
<path d="M911.400 72.300l7 7.200M918.400 72.300l-7 7.200" stroke="#e8262b" stroke-width="1"/>
<g><path d="M927.400 74.600h6.600l-2.300 2.400h-6.600z" fill="#2aa5c7"/><path d="M927.400 76.800h6.600l-2.300 2.400h-6.600z" fill="#9aa7ad"/><path d="M927.500 72l4.200 2.200-4.200 2.200z" fill="#f7c91c"/></g>
<g><path d="M940.200 73.200h6.800l-1.600 3.800h-6.800z" fill="#c4cbd0"/><path d="M939.800 77.400h5.800" stroke="#7d868b" stroke-width="0.900"/><path d="M947.800 71.800l-4.200 6.600-1.600 1.200" stroke="#1fa6c9" stroke-width="0.900" fill="none"/></g>
<g><path d="M954.200 74c0-3.200 5.600-3.200 5.600-.2 0 2-2.800 2-2.800 3.600" stroke="#1fa6c9" stroke-width="1.100" fill="none"/><rect x="953.800" y="76.400" width="4" height="3.400" fill="#6f7a80"/></g>
<path d="M966.800 72.200h7.800l-3 3.600v4l-1.800-1v-3z" fill="#1fa6c9"/>
<circle cx="984.300" cy="75.800" r="3.700" fill="#1a95b5"/><path d="M984.300 75v3M984.300 73.300v.8" stroke="#e8f6fa" stroke-width="1.100"/>
<path d="M996.600 71.800h4.200v8h-5.200v-7z" fill="#eef0f2"/><path d="M997 71.800v8" stroke="#9edcf0" stroke-width="0.500"/>
<rect x="880.100" y="90.600" width="139.200" height="419.700" fill="#c3c5c9"/>
<!-- header -->
<defs><linearGradient id="hg" x1="0" y1="0" x2="0" y2="1"><stop offset="0" stop-color="#dadbdd"/><stop offset="0.450" stop-color="#b3b5b8"/><stop offset="1" stop-color="#7d7f82"/></linearGradient></defs>
<rect x="880.100" y="82.600" width="139.200" height="8" fill="url(#hg)"/>
<g stroke="#e4e5e7" stroke-width="0.600"><path d="M921.600 82.600v8M931 82.600v8M940.800 82.600v8M955.400 82.600v8M971.300 82.600v8M983.100 82.600v8M993 82.600v8"/></g>
<g stroke="#6a6c6f" stroke-width="0.500"><path d="M921 82.600v8M930.400 82.600v8M940.200 82.600v8M954.800 82.600v8M970.700 82.600v8M982.500 82.600v8M992.400 82.600v8"/></g>
<path d="M911.600 84.800h6.600l-3.300 3.600z" fill="#1f9dbd"/>
<path d="M880.100 91.100h41.500" stroke="#1f9dbd" stroke-width="0.500" stroke-dasharray="1 0.600"/>
<g font-size="6.200" letter-spacing="-0.190" font-family="Liberation Sans" fill="#1a1a1a" stroke="#1a1a1a" stroke-width="0.150"><text x="892" y="89.100">Name</text><text x="933.300" y="89.100">C</text><text x="943.600" y="89.100">I/O</text><text x="958.400" y="89.100">F/U</text><text x="976" y="89.100">Tr</text><text x="986.400" y="89.100">B</text></g>
<!-- list -->
<path d="M880.100 91v419.200h139.200v-419.200" fill="none" stroke="#2e2e2e" stroke-width="0.800"/><path d="M1018.300 91v418.600" stroke="#d4d5d8" stroke-width="0.600"/>
<path d="M1019.900 68v442.800h-140.400" fill="none" stroke="#dcdde0" stroke-width="0.600"/>
<path d="M884.300 92.500v23h3M884.300 96.300h3M884.300 105.900h3" stroke="#8d8f93" stroke-width="0.500" fill="none"/>
<rect x="889.600" y="101.300" width="19.400" height="9.400" fill="#8f9194"/>
<g font-size="6.100" letter-spacing="-0.190" font-family="Liberation Sans" fill="#111" stroke="#111" stroke-width="0.150"><text x="890.600" y="98.300">Grains</text><text x="890.600" y="107.900">Layer0</text><text x="890.600" y="117.500">VoronoiGrid</text></g>
<path d="M923.600 97l1.900 2.400 3.400-5.400" stroke="#1f8fb0" stroke-width="0.900" fill="none"/>
<rect x="930.800" y="91.900" width="10" height="9.200" fill="#ff00ff"/><rect x="930.800" y="101.100" width="10" height="9.500" fill="#989a9d"/><rect x="930.800" y="110.600" width="10" height="9.800" fill="#0000ff"/><path d="M930.800 120.700h10" stroke="#e6d9a8" stroke-width="0.600"/>
<g id="bulbs"><circle cx="945.200" cy="95.600" r="2.300" fill="#f7e71c"/><path d="M944.300 97.600h1.800v1.800h-1.800z" fill="#6a6c3a"/><circle cx="945.200" cy="105.200" r="2.300" fill="#f7e71c"/><path d="M944.300 107.200h1.800v1.800h-1.800z" fill="#6a6c3a"/><circle cx="945.200" cy="114.600" r="2" fill="#55585a"/><path d="M944.400 116.400h1.600v2.400h-1.600z" fill="#3a3c3e"/><circle cx="945.500" cy="114.300" r="0.700" fill="#b5b7bb"/></g>
<g id="locks"><g id="lk"><rect x="956.300" y="95.600" width="5" height="4.200" fill="#4a4c4f"/><path d="M960.300 95.600v-1.300c0-1.600 2.600-1.600 2.600 0v.6" stroke="#4a4c4f" stroke-width="0.600" fill="none"/><rect x="958" y="97" width="1.600" height="1.600" fill="#9a9c9f"/></g><use href="#lk" y="9.600"/><use href="#lk" y="19.100"/></g>
<g id="trs"><g id="tr"><rect x="973.200" y="93.300" width="4.400" height="4.400" fill="#eef4f6" stroke="#6fb9cf" stroke-width="0.400"/><rect x="975.200" y="95.300" width="5" height="4.600" fill="#1f9dbd"/></g><use href="#tr" y="9.600"/><use href="#tr" y="19.100"/></g>
</svg>
</div>

<div class="a" style="left:0;top:512px;width:1024px;height:20px;background:#272727"></div>
<div class="a" style="left:1.800px;top:511.700px;width:1011.400px;height:19.600px;background:#c4c6ca;border-top:0.6px solid #e8e8ea;border-bottom:0.6px solid #dcdde0"></div>
<div class="a" style="left:0;top:531.400px;width:1024px;height:1.500px;background:#0a0a0a"></div>
<div class="t" style="left:3.200px;top:513.200px;font-size:6.050px">Pick LEFTMOUSE to desplace view (ESC to quit).</div>
<div class="t" style="left:3.200px;top:520.700px;font-size:6.050px">Pick LEFTMOUSE to desplace view (ESC to quit).</div>
<svg class="a" style="left:1013.200px;top:512.400px" width="10.800" height="19.600" viewBox="0 0 10.800 19.600"><rect width="10.800" height="19.600" fill="#242424"/><path d="M3 4.400l2.300-2.200 2.300 2.200z" fill="#f2f2f2"/><rect x="2.700" y="7.200" width="5.400" height="5" fill="#e2e3e5"/><rect x="3.900" y="8.500" width="3" height="2.400" fill="#f6f6f6"/><path d="M3 14.400l2.300 2.200 2.300-2.200z" fill="#f2f2f2"/><path d="M3 5.200h4.600M3 13.800h4.600" stroke="#f2f2f2" stroke-width="0.500"/></svg>
<div class="a" style="left:0;top:532px;width:1024px;height:15.400px;background:#272727"></div>
<div class="t" style="left:3.800px;top:536px;color:#e6e6e6;font-size:6.100px">Command:</div>
<div class="a" style="left:38px;top:534px;width:950px;height:10.700px;background:#c4c6ca"></div>
<svg class="a" style="left:994px;top:533px" width="30" height="13" viewBox="994 533 30 13"><path d="M1000.800 535.200h2.200l-1.400 3h1.800l-3.800 4.800.9-3.600h-1.600z" fill="#1fa6c9"/><rect x="1011.300" y="535.200" width="8.600" height="8" fill="#4a4c4e" stroke="#77797c" stroke-width="0.600"/><path d="M1014.200 535.200v8M1017 535.200v8M1011.300 537.900h8.600M1011.300 540.600h8.600" stroke="#8d8f92" stroke-width="0.500"/><rect x="1014.200" y="537.900" width="2.800" height="2.700" fill="#d8d8d8"/></svg>
<div class="a" style="left:0;top:547.200px;width:1024px;height:0.900px;background:#5a5c5f"></div>
<div class="a" style="left:0;top:548.100px;width:1024px;height:12px;background:#262626"></div>
<div class="t" style="left:53.600px;top:550px;color:#d8d8d8;font-size:6.100px">Zoom: x 0.94</div>
<div class="t" style="left:234.600px;top:550px;color:#d8d8d8;font-size:6.100px">Nodes: 0, Elements: 0</div>
<div class="t" style="left:464.200px;top:550px;color:#d8d8d8;font-size:6.100px">Render: normal</div>
<div class="t" style="left:631.400px;top:550px;color:#d8d8d8;font-size:6.100px">Layers: 3(Off: 1)</div>
<div class="t" style="left:809.600px;top:550px;color:#d8d8d8;font-size:6.100px">( -2.954933,  10.45844,  0)</div>
<div class="t" style="left:990px;top:550px;color:#d8d8d8;font-size:6.100px">Pre</div>
<!-- taskbar -->
<div class="a" style="left:0;top:559.800px;width:1024px;height:16.200px;background:linear-gradient(90deg,#101010 0%,#141210 20%,#1c1611 32%,#1a1512 45%,#141212 60%,#0f0e0e 80%,#0d0d0d 100%)"></div>
<div class="a" style="left:79.400px;top:559.800px;width:19.600px;height:16.200px;background:#464646"></div>
<svg class="a" style="left:0;top:559.800px" width="1024" height="16.200" viewBox="0 559.800 1024 16.200">
<g fill="#f4f4f4"><path d="M5 564.600l3.700-.5v3.400h-3.700zM9.300 564l4.500-.6v4.100h-4.500zM5 568.100h3.700v3.400l-3.700-.5zM9.300 568.100h4.500v4.100l-4.500-.6z"/></g>
<circle cx="30.200" cy="566" r="2.700" fill="none" stroke="#f4f4f4" stroke-width="0.900"/><path d="M28.300 568l-3.600 3.900" stroke="#f4f4f4" stroke-width="1"/>
<g><circle cx="49.700" cy="567.600" r="4.100" fill="#e33b2e"/><path d="M49.700 567.600l-3.600 2.000a4.100 4.100 0 0 0 7.200 0z" fill="#2da94f"/><path d="M49.700 567.600l3.600 2.000a4.100 4.100 0 0 0-1.200-5.400z" fill="#fbbd05"/><path d="M46.100 569.600a4.100 4.100 0 0 1 0-4l3.600 2z" fill="#e33b2e"/><circle cx="49.700" cy="567.600" r="1.800" fill="#f4f4f4"/><circle cx="49.700" cy="567.600" r="1.400" fill="#4285f4"/></g>
<g fill="none" stroke-width="0.900"><path d="M66.600 565.600c1.600-1.800 4-1.800 5.600 0" stroke="#e85a2a"/><path d="M72.200 569.600c-1.600 1.800-4 1.800-5.600 0" stroke="#e85a2a"/><path d="M71 564.500l1.500 1.300-1.800.7M67.800 570.700l-1.500-1.300 1.800-.7" stroke="#f0a03a" stroke-width="0.700"/></g>
<circle cx="89" cy="567.600" r="4.100" fill="#1fa9cc"/><text x="89" y="569" font-size="3.600" font-family="Liberation Sans" font-weight="bold" fill="#d9f2f8" text-anchor="middle">GiD</text>
<g fill="#8fc3e8"><rect x="42" y="575" width="15" height="1"/><rect x="62" y="575" width="14.500" height="1"/><rect x="79.400" y="575" width="19.600" height="1"/></g>
<!-- tray -->
<g stroke="#f0f0f0" fill="none" stroke-width="0.800"><circle cx="896.600" cy="565.200" r="1.300"/><path d="M894 570.500c0-3 5-3 5 0"/><circle cx="899.600" cy="564" r="0.900" stroke-width="0.600"/><path d="M908.200 569l2.900-2.900 2.900 2.900"/></g>
<g><rect x="919.400" y="565.200" width="8" height="4.400" fill="none" stroke="#f0f0f0" stroke-width="0.700"/><rect x="920.300" y="566" width="3.600" height="2.800" fill="#f0f0f0"/><rect x="927.600" y="566.400" width="0.900" height="2" fill="#f0f0f0"/><path d="M918.600 564.400l2 1.600" stroke="#f0f0f0" stroke-width="0.700"/></g>
<g><path d="M932.400 566.300h1.600l2.200-2v6.600l-2.200-2h-1.600z" fill="none" stroke="#f0f0f0" stroke-width="0.700"/><path d="M937.600 565.400c.9.900.9 3.300 0 4.200" stroke="#f0f0f0" stroke-width="0.600" fill="none"/><path d="M939 564.200c1.500 1.600 1.500 5 0 6.600" stroke="#9a9a9a" stroke-width="0.600" fill="none"/></g>
<g fill="none"><path d="M946.500 571.500l6.500-6.500" stroke="#8a8a8a" stroke-width="0.700"/><path d="M948 571.500a4 4 0 0 1 4-4M950.300 571.500a1.800 1.800 0 0 1 1.800-1.800" stroke="#f0f0f0" stroke-width="0.700"/><path d="M946.800 569a6 6 0 0 1 5.300-3.700" stroke="#8a8a8a" stroke-width="0.700"/></g>
<g font-size="6.200" letter-spacing="-0.190" font-family="Liberation Sans" fill="#f4f4f4"><text x="958.800" y="569.800">ENG</text><text x="978.400" y="569.800">10:38</text></g>
<path d="M1002.300 564h8.400v6.200h-3.200l-1 1.300-1-1.300h-3.200z" fill="none" stroke="#f0f0f0" stroke-width="0.800"/>
<path d="M1021 560v16" stroke="#6a6a6a" stroke-width="0.500"/>
</svg>

</body></html>
